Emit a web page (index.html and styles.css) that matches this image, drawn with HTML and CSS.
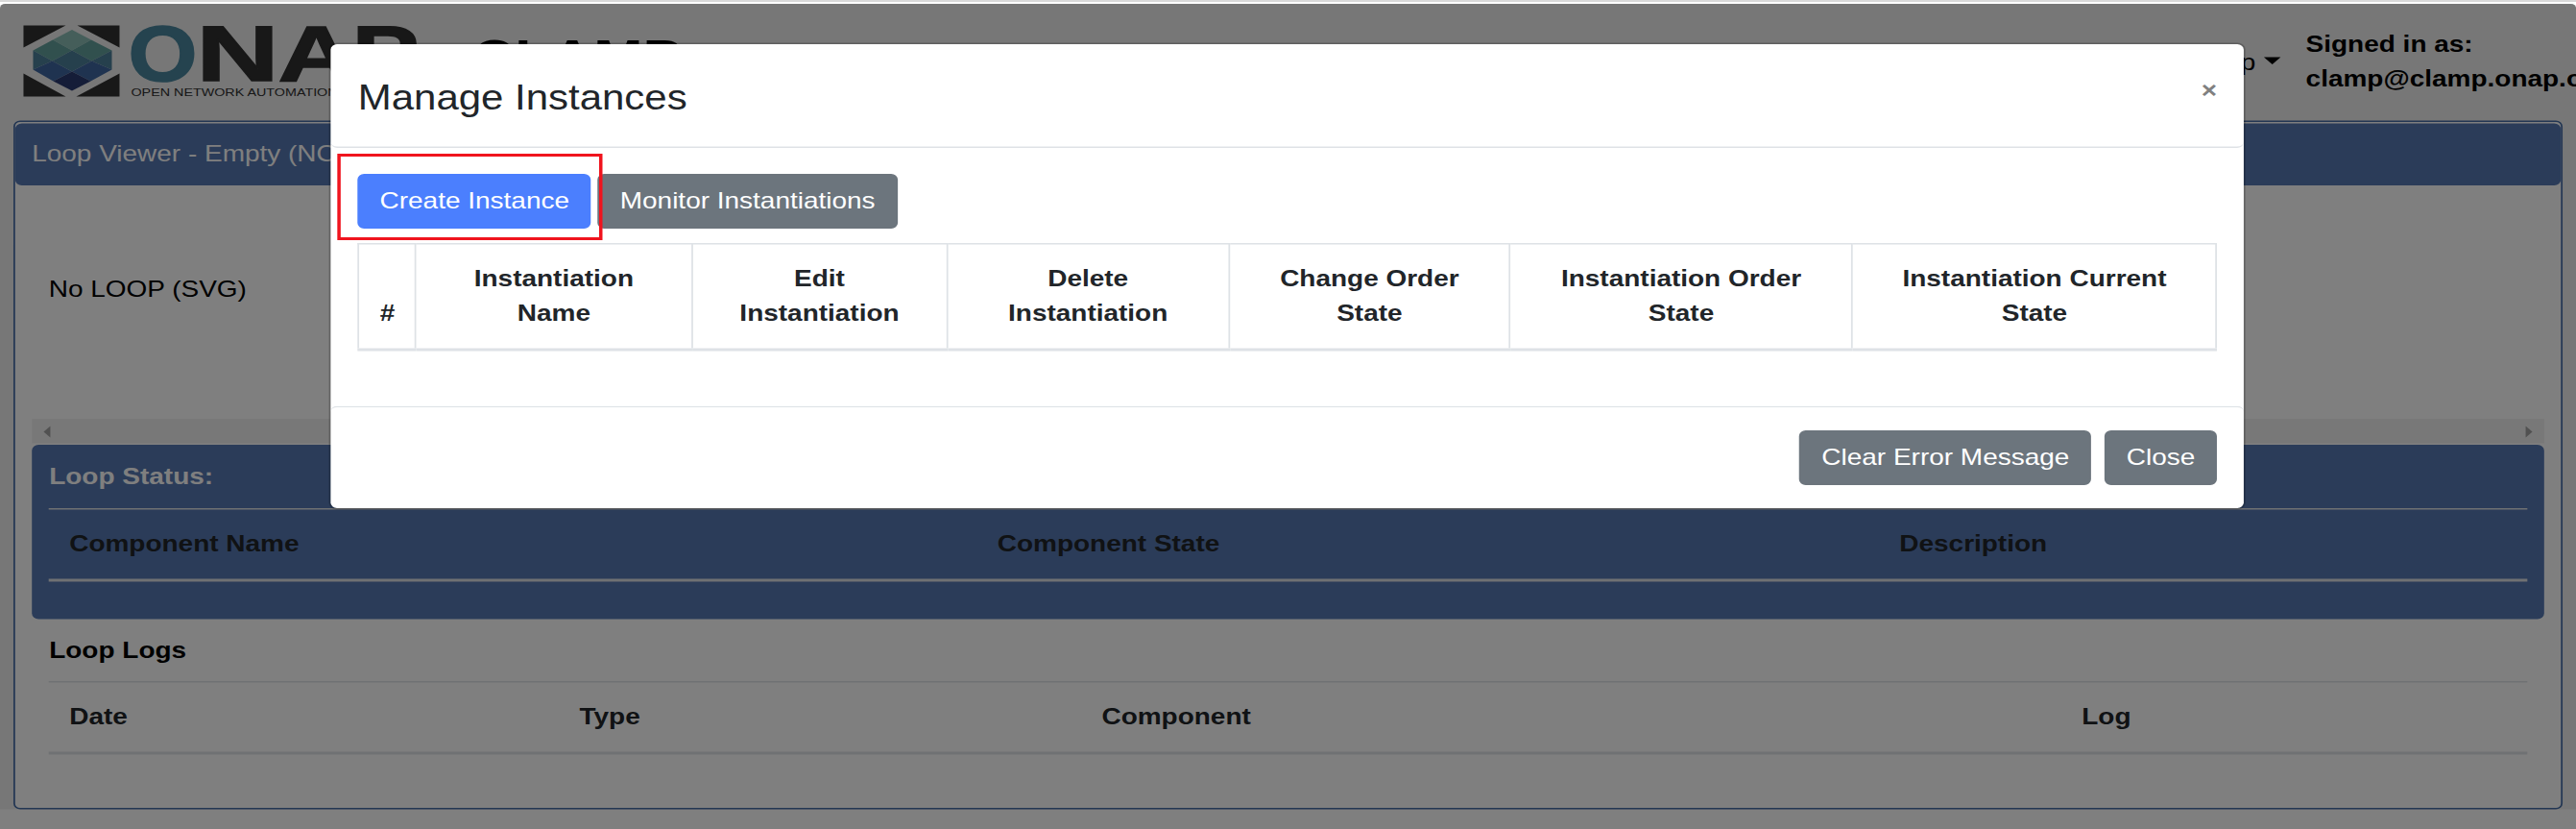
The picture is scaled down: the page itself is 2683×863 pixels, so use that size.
FILE: index.html
```html
<!DOCTYPE html>
<html lang="en">
<head>
<meta charset="utf-8">
<title>CLAMP</title>
<link rel="stylesheet" href="styles.css">
</head>
<body>
<div class="frame-edge"></div>
<div class="viewport">
  <div class="app">
    <header class="navbar">
      <svg class="logo" viewBox="0 0 410 80" preserveAspectRatio="none">
        <path fill="#303030" d="M0 0h44L0 23zM56 0h44v23zM0 74V50l44 24zM100 74V50L55 74z"/>
        <path fill="#8abdb5" d="M50.500 4.500 70.500 15 50.500 26 30.500 15z"/>
        <path fill="#62a09c" d="M30.500 15 50.500 26 30 37 10 26zM70.500 15 92 26 71 37 50.500 26z"/>
        <path fill="#4d809a" d="M50.500 26 71 37 50.500 48 30 37zM10 26 30 37 10 46zM92 26v20L71 37z"/>
        <path fill="#3f67a0" d="M30 37 50.500 48 31 58 10 46zM71 37 92 46 70 58 50.500 48z"/>
        <path fill="#2a3a70" d="M50.500 48 70 58 50.500 68 31 58z"/>
        <g class="logo-word">
          <text x="109" y="57.500" textLength="72" lengthAdjust="spacingAndGlyphs" class="logo-o">O</text>
          <text x="180" y="57.500" textLength="86" lengthAdjust="spacingAndGlyphs">N</text>
          <text x="265" y="57.500" textLength="80" lengthAdjust="spacingAndGlyphs">A</text>
          <text x="342" y="57.500" textLength="70" lengthAdjust="spacingAndGlyphs">P</text>
        </g>
        <text class="logo-tag" x="112" y="74" textLength="296" lengthAdjust="spacingAndGlyphs">OPEN NETWORK AUTOMATION PLATFORM</text>
      </svg>
      <h1 class="brand">CLAMP</h1>
      <span class="menu">Help<i class="caret"></i></span>
      <div class="user">Signed in as:<br>clamp@clamp.onap.org</div>
    </header>
    <main class="panel">
      <div class="panel-head">Loop Viewer - Empty (NO loop loaded yet)</div>
      <div class="svg-area">No LOOP (SVG)</div>
      <div class="scrollbar"><i class="arrow-left"></i><i class="arrow-right"></i></div>
      <section class="status">
        <h2 class="section-title">Loop Status:</h2>
        <div class="grid-head status-cols"><span>Component Name</span><span>Component State</span><span>Description</span></div>
      </section>
      <section class="logs">
        <h2 class="section-title">Loop Logs</h2>
        <div class="grid-head log-cols"><span>Date</span><span>Type</span><span>Component</span><span>Log</span></div>
      </section>
    </main>
  </div>
  <div class="backdrop">
    <div class="modal">
      <div class="modal-header"><div class="modal-title">Manage Instances</div><span class="modal-x">×</span></div>
      <div class="modal-body">
        <div class="actions"><button class="btn primary">Create Instance</button><button class="btn">Monitor Instantiations</button></div>
        <table class="instances">
          <colgroup><col class="c1"><col class="c2"><col class="c3"><col class="c4"><col class="c5"><col class="c6"><col class="c7"></colgroup>
          <thead><tr><th>#</th><th>Instantiation<br>Name</th><th>Edit<br>Instantiation</th><th>Delete<br>Instantiation</th><th>Change Order<br>State</th><th>Instantiation Order<br>State</th><th>Instantiation Current<br>State</th></tr></thead>
        </table>
        <div class="highlight"></div>
      </div>
      <div class="modal-footer"><button class="btn">Clear Error Message</button><button class="btn">Close</button></div>
    </div>
  </div>
</div>
</body>
</html>
```
FILE: styles.css
```css
* { box-sizing: border-box; }
html, body { margin: 0; height: 863px; overflow: hidden; }
body { background: #fff; font-family: "Liberation Sans", Arial, sans-serif; }
.frame-edge { height: 4px; background: #fff; border-top: 2px solid #d9d9d9; }

/* Page laid out at 1535 x 573 and stretched to fill the window */
.viewport {
  position: relative;
  width: 1535px;
  height: 572.7px;
  overflow: hidden;
  border-radius: 3px 3px 0 0;
  font-size: 16px;
  line-height: 24px;
  color: #212529;
  transform: scale(1.7479, 1.5);
  transform-origin: 0 0;
}

.app { height: 559px; background: #eee; padding: 0 8px; }
.navbar { display: flex; height: 80.800px; padding: 14.7px 0 0 6.3px; color: #000; }
.logo { width: 234.600px; height: 53.300px; flex: none; overflow: visible; }
.logo-word { font-weight: bold; font-size: 82px; fill: #303030; }
.logo-word text { stroke: #303030; stroke-width: 1.500px; }
.logo-word .logo-o { fill: #4a869e; stroke: #4a869e; }
.logo-tag { font-size: 11.500px; fill: #303030; }
.brand { margin: 2.400px 0 0 32.500px; font-size: 35.200px; line-height: 42px; }
.menu { margin: 14px 0 0 auto; white-space: nowrap; }
.caret { display: inline-block; margin-left: 4.800px; vertical-align: 4px; border: 5px solid transparent; border-top-color: #000; border-bottom: 0; }
.user { width: 161px; margin: 1.300px -8px 0 15.200px; font-weight: bold; }

.panel { height: 478px; background: #fff; border: 1px solid #466ca6; border-radius: 4px; }
.panel-head { height: 43.600px; margin-top: 1px; padding: 9.700px 10px 0; background: #5678b2; color: #fff; border-radius: 4px; }
.svg-area { height: 161.800px; padding: 60px 20px 0; color: #000; }
.scrollbar { display: flex; justify-content: space-between; align-items: center; height: 17px; margin: 0 10.300px; padding: 0 6.300px; background: #f1f1f1; }
.arrow-left, .arrow-right { border: 4px solid transparent; }
.arrow-left { border-left: 0; border-right-color: #a3a3a3; }
.arrow-right { border-right: 0; border-left-color: #a3a3a3; }
.status { height: 120.500px; margin: 1px 10.300px 0; padding: 7.500px 10px 0; background: #5678b2; border-radius: 4px; }
.status .section-title { color: #fff; padding-top: 2.500px; height: 36.300px; }
.section-title { margin: 0; padding-top: 3px; height: 35.800px; font-size: 16px; line-height: 24px; }
.logs { padding: 7.800px 20.300px 0; }
.logs .section-title { color: #000; }
.grid-head { display: grid; height: 50.700px; padding: 12px 12px 0; border-top: 1px solid #dee2e6; border-bottom: 2px solid #dee2e6; font-weight: bold; }
.status-cols { grid-template-columns: 553px 537.500px 1fr; }
.log-cols { grid-template-columns: 304px 311.200px 584px 1fr; }

.backdrop { position: absolute; inset: 0; background: rgba(0, 0, 0, .5); }
.modal { width: 1142px; height: 323.500px; margin: 27.400px 0 0 196.300px; background: #fff; background-clip: padding-box; border: 1px solid rgba(0, 0, 0, .2); border-radius: 4.800px; }
.modal-header { display: flex; justify-content: space-between; height: 71.200px; padding: 18.200px 16.300px 0 16px; border-bottom: 1px solid #dee2e6; border-radius: 4px; }
.modal-title { font-size: 24px; line-height: 36px; }
.modal-x { padding-top: 1px; font-size: 16px; line-height: 24px; font-weight: bold; color: #808080; }
.modal-body { position: relative; height: 179px; padding: 18.200px 16.300px 0 16px; }
.actions { display: flex; gap: 4.200px; }
.btn { height: 38px; padding: 0 12px; border: 1px solid #6c757d; border-radius: 4px; background: #6c757d; color: #fff; font: 16px/24px "Liberation Sans", Arial, sans-serif; white-space: nowrap; }
.primary { background: #4b7ffe; border-color: #4b7ffe; }
.instances { width: 1107.700px; margin-top: 10px; border-collapse: collapse; table-layout: fixed; }
.instances th { height: 73.500px; padding: 11.500px 0; vertical-align: bottom; text-align: center; border: 1px solid #dee2e6; border-bottom-width: 2px; }
.c1 { width: 34px; } .c2 { width: 164.500px; } .c3 { width: 152px; } .c4 { width: 168px; } .c5 { width: 167.500px; } .c6 { width: 204px; } .c7 { width: 217px; }
.highlight { position: absolute; left: 4px; top: 4.800px; width: 157.600px; height: 60px; border: 2px solid #f0141e; }
.modal-footer { display: flex; justify-content: flex-end; gap: 8px; padding: 16px 16.300px 0; border-top: 1px solid #dee2e6; border-radius: 4px; }
```
